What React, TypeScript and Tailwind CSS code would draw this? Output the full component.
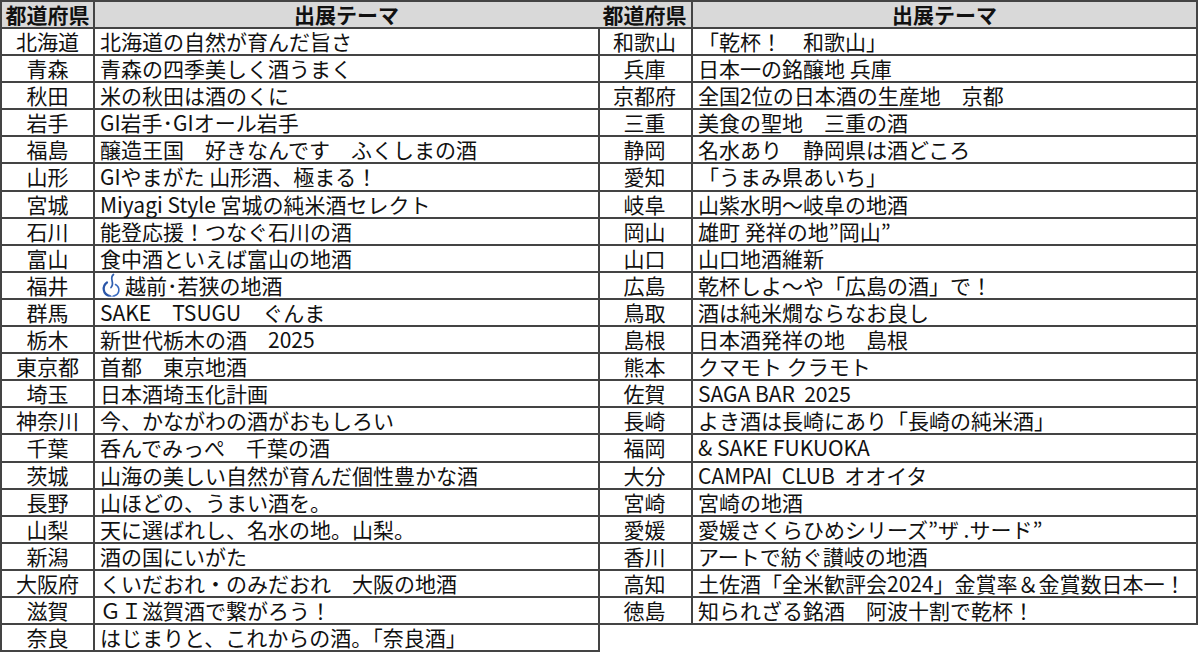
import React from "react";

type Row = { pref: string; theme: React.ReactNode };

const FukuiMark = () => (
  <svg width="24" height="25" viewBox="0 0 24 25" className="mr-[1px] -my-[2px] shrink-0" fill="none">
    <path d="M13.5 1.5 C 8.5 5.5, 15.5 9.5, 11 14.5" stroke="#2f5fb0" strokeWidth="1.7" strokeLinecap="round" />
    <path d="M7 9.5 C 2 13, 2.5 21.5, 10 23" stroke="#2a56a8" strokeWidth="2.2" strokeLinecap="round" />
    <path d="M15.5 11.5 C 20.5 14.5, 20 21.5, 13.5 23" stroke="#3a6cc0" strokeWidth="1.6" strokeLinecap="round" />
    <path d="M9 23.2 L 14.5 23.2" stroke="#7b9ad8" strokeWidth="1.1" strokeLinecap="round" />
  </svg>
);

const left: Row[] = [
  { pref: "北海道", theme: "北海道の自然が育んだ旨さ" },
  { pref: "青森", theme: "青森の四季美しく酒うまく" },
  { pref: "秋田", theme: "米の秋田は酒のくに" },
  { pref: "岩手", theme: "GI岩手･GIオール岩手" },
  { pref: "福島", theme: "醸造王国　好きなんです　ふくしまの酒" },
  { pref: "山形", theme: "GIやまがた 山形酒、極まる！" },
  { pref: "宮城", theme: "Miyagi Style 宮城の純米酒セレクト" },
  { pref: "石川", theme: "能登応援！つなぐ石川の酒" },
  { pref: "富山", theme: "食中酒といえば富山の地酒" },
  {
    pref: "福井",
    theme: (
      <span className="flex items-center">
        <FukuiMark />
        越前･若狭の地酒
      </span>
    ),
  },
  { pref: "群馬", theme: "SAKE　TSUGU　ぐんま" },
  { pref: "栃木", theme: "新世代栃木の酒　2025" },
  { pref: "東京都", theme: "首都　東京地酒" },
  { pref: "埼玉", theme: "日本酒埼玉化計画" },
  { pref: "神奈川", theme: "今、かながわの酒がおもしろい" },
  { pref: "千葉", theme: "呑んでみっぺ　千葉の酒" },
  { pref: "茨城", theme: "山海の美しい自然が育んだ個性豊かな酒" },
  { pref: "長野", theme: "山ほどの、うまい酒を。" },
  { pref: "山梨", theme: "天に選ばれし、名水の地。山梨。" },
  { pref: "新潟", theme: "酒の国にいがた" },
  { pref: "大阪府", theme: "くいだおれ・のみだおれ　大阪の地酒" },
  { pref: "滋賀", theme: "ＧＩ滋賀酒で繋がろう！" },
  { pref: "奈良", theme: "はじまりと、これからの酒。「奈良酒」" },
];

const right: Row[] = [
  { pref: "和歌山", theme: "「乾杯！　和歌山」" },
  { pref: "兵庫", theme: "日本一の銘醸地 兵庫" },
  { pref: "京都府", theme: "全国2位の日本酒の生産地　京都" },
  { pref: "三重", theme: "美食の聖地　三重の酒" },
  { pref: "静岡", theme: "名水あり　静岡県は酒どころ" },
  { pref: "愛知", theme: "「うまみ県あいち」" },
  { pref: "岐阜", theme: "山紫水明～岐阜の地酒" },
  { pref: "岡山", theme: "雄町 発祥の地”岡山”" },
  { pref: "山口", theme: "山口地酒維新" },
  { pref: "広島", theme: "乾杯しよ～や「広島の酒」で！" },
  { pref: "鳥取", theme: "酒は純米燗ならなお良し" },
  { pref: "島根", theme: "日本酒発祥の地　島根" },
  { pref: "熊本", theme: "クマモト クラモト" },
  { pref: "佐賀", theme: "SAGA BAR  2025" },
  { pref: "長崎", theme: "よき酒は長崎にあり「長崎の純米酒」" },
  { pref: "福岡", theme: "& SAKE FUKUOKA" },
  { pref: "大分", theme: "CAMPAI  CLUB  オオイタ" },
  { pref: "宮崎", theme: "宮崎の地酒" },
  { pref: "愛媛", theme: "愛媛さくらひめシリーズ”ザ .サード”" },
  { pref: "香川", theme: "アートで紡ぐ讃岐の地酒" },
  { pref: "高知", theme: "土佐酒「全米歓評会2024」金賞率＆金賞数日本一！" },
  { pref: "徳島", theme: "知られざる銘酒　阿波十割で乾杯！" },
];

const Block = ({ rows, first }: { rows: Row[]; first?: boolean }) => (
  <div className={`w-[600px] border-t-2 border-[#444] ${first ? "border-l-2" : ""}`}>
    <div className="flex h-[27px] bg-[#d9d9d9] font-bold">
      <div className={`${first ? "w-[93px]" : "w-[95px]"} border-r-2 border-b-2 border-[#444] flex items-center justify-center`}>
        都道府県
      </div>
      <div className="flex-1 border-r-2 border-b-2 border-[#444] flex items-center justify-center">
        出展テーマ
      </div>
    </div>
    {rows.map((r) => (
      <div key={r.pref} className="flex h-[27.1px]">
        <div className={`${first ? "w-[93px]" : "w-[95px]"} border-r-2 border-b-2 border-[#444] flex items-center justify-center`}>
          {r.pref}
        </div>
        <div className="flex-1 border-r-2 border-b-2 border-[#444] flex items-center pl-[5px] whitespace-pre">
          {r.theme}
        </div>
      </div>
    ))}
  </div>
);

export default function App() {
  return (
    <div
      className="w-[1200px] h-[654px] bg-white text-[#111] text-[21px] leading-[1.1] overflow-hidden flex items-start"
      style={{ fontFamily: '"Noto Sans CJK JP", "Noto Sans", sans-serif' }}
    >
      <Block rows={left} first />
      <div className="-ml-[2px]">
        <Block rows={right} />
      </div>
    </div>
  );
}
